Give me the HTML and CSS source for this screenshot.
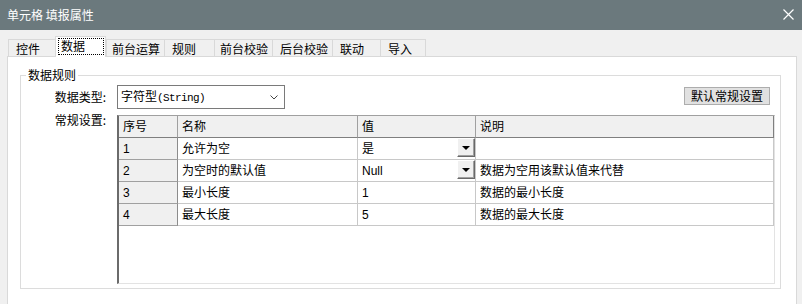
FILE: index.html
```html
<!DOCTYPE html>
<html lang="zh-CN">
<head>
    <meta charset="UTF-8">
    <title>单元格 填报属性</title>
    <link rel="stylesheet" href="styles.css">
</head>
<body>
    <div class="titlebar">
        <span class="title">单元格 填报属性</span>
        <svg class="close" width="11" height="11" viewBox="0 0 11 11">
            <path d="M0.5 0.5 L10.5 10.5 M10.5 0.5 L0.5 10.5" stroke="#fff" stroke-width="1.2" fill="none"/>
        </svg>
    </div>

    <div class="tabs">
        <div class="tab">控件</div>
        <div class="tab active"><span class="focus">数据</span></div>
        <div class="tab long">前台运算</div>
        <div class="tab">规则</div>
        <div class="tab long">前台校验</div>
        <div class="tab">后台校验</div>
        <div class="tab">联动</div>
        <div class="tab last">导入</div>
    </div>

    <div class="panel">
        <fieldset class="group">
            <legend>数据规则</legend>

            <div class="row">
                <label class="lbl">数据类型:</label>
                <div class="combo">
                    <span>字符型<span class="mono">(String)</span></span>
                    <svg width="8" height="5" viewBox="0 0 8 5">
                        <path d="M0.5 0.5 L4 4 L7.5 0.5" stroke="#444" stroke-width="1" fill="none"/>
                    </svg>
                </div>
                <button class="btn">默认常规设置</button>
            </div>

            <div class="row grid-row">
                <label class="lbl top">常规设置:</label>
                <div class="grid">
                    <div class="grid-line head">
                        <div class="cell">序号</div>
                        <div class="cell">名称</div>
                        <div class="cell">值</div>
                        <div class="cell">说明</div>
                    </div>
                    <div class="grid-line">
                        <div class="cell num">1</div>
                        <div class="cell">允许为空</div>
                        <div class="cell drop">
                            <span>是</span>
                            <span class="drop-btn"></span>
                        </div>
                        <div class="cell"></div>
                    </div>
                    <div class="grid-line">
                        <div class="cell num">2</div>
                        <div class="cell">为空时的默认值</div>
                        <div class="cell drop">
                            <span>Null</span>
                            <span class="drop-btn"></span>
                        </div>
                        <div class="cell">数据为空用该默认值来代替</div>
                    </div>
                    <div class="grid-line">
                        <div class="cell num">3</div>
                        <div class="cell">最小长度</div>
                        <div class="cell">1</div>
                        <div class="cell">数据的最小长度</div>
                    </div>
                    <div class="grid-line">
                        <div class="cell num">4</div>
                        <div class="cell">最大长度</div>
                        <div class="cell">5</div>
                        <div class="cell">数据的最大长度</div>
                    </div>
                </div>
            </div>
        </fieldset>
    </div>
</body>
</html>
```

FILE: styles.css
```css
* {
    box-sizing: border-box;
}
body {
    margin: 0;
    width: 802px;
    height: 304px;
    overflow: hidden;
    background-color: #f0f0f0;
    font-family: "Liberation Sans", "Noto Sans CJK SC", sans-serif;
    font-size: 12px;
    line-height: 14px;
    color: #000;
}

/* window title */
.titlebar {
    height: 30px;
    background-color: #6b797d;
    display: flex;
    align-items: center;
    padding: 0 7px;
    color: #fff;
}
.title {
    flex: 1;
    font-family: "Noto Sans CJK SC", sans-serif;
}
.close {
    margin-right: 1px;
    margin-top: -1px;
}

/* tab strip */
.tabs {
    display: flex;
    align-items: flex-end;
    height: 27px;
    padding-left: 8px;
}
.tab {
    height: 17px;
    margin-bottom: 1px;
    padding: 1px 0 0 7px;
    border-top: 1px solid #d9d9d9;
    border-left: 1px solid #d9d9d9;
    background-color: #f0f0f0;
    font-family: "Noto Sans CJK SC", sans-serif;
    line-height: 15px;
}
.tab.long {
    padding-left: 5px;
}
.tab.last {
    border-right: 1px solid #d9d9d9;
}
.tab:nth-child(1) { width: 47px; }
.tab:nth-child(2) { width: 51px; }
.tab:nth-child(3) { width: 58px; }
.tab:nth-child(4) { width: 50px; }
.tab:nth-child(5) { width: 58px; }
.tab:nth-child(6) { width: 60px; }
.tab:nth-child(7) { width: 48px; }
.tab:nth-child(8) { width: 46px; }
.tab.active {
    position: relative;
    z-index: 1;
    height: 21px;
    margin-bottom: 0;
    padding: 1px 0 0 2px;
    border-right: 1px solid #d9d9d9;
    background-color: #fff;
}
.focus {
    display: inline-block;
    width: 46px;
    height: 17px;
    padding-left: 2px;
    border: 1px dotted #000;
    line-height: 14px;
}

/* white page under the tabs */
.panel {
    width: 790px;
    height: 260px;
    margin: -1px 0 0 7px;
    padding: 11px 15px 0 12px;
    background-color: #fff;
    border: 1px solid #d9d9d9;
    font-family: "Noto Sans CJK SC", sans-serif;
}
.group {
    margin: 0;
    padding: 0 0 4px 0;
    min-width: 0;
    border: 1px solid #dcdcdc;
}
.group legend {
    margin-left: 5px;
    padding: 0 2px;
    line-height: 14px;
}
.row {
    display: flex;
    align-items: center;
    margin-top: 3px;
}
.grid-row {
    align-items: flex-start;
    margin-top: 6px;
}
.lbl {
    width: 96px;
    padding-right: 11px;
    text-align: right;
}
.lbl.top {
    margin-top: -2px;
}
.combo {
    width: 168px;
    height: 24px;
    display: flex;
    align-items: center;
    justify-content: space-between;
    padding: 0 6px 0 3px;
    border: 1px solid #7a7a7a;
    background-color: #fff;
}
.mono {
    font-family: "Liberation Mono", monospace;
    font-size: 11px;
    letter-spacing: -0.6px;
}
.btn {
    margin: 2px 10px 0 auto;
    align-self: flex-start;
    height: 18px;
    padding: 0 6px;
    border: 1px solid #adadad;
    background-color: #e1e1e1;
    font-family: "Noto Sans CJK SC", sans-serif;
    font-size: 12px;
    line-height: 14px;
    color: #000;
}

/* data grid */
.grid {
    width: 658px;
    height: 169px;
    margin-right: 5px;
    border-top: 1px solid #a0a0a0;
    border-left: 2px solid #6b6b6b;
    border-right: 1px solid #e3e3e3;
    border-bottom: 1px solid #e3e3e3;
    background-color: #fff;
    font-family: "Liberation Sans", "Noto Sans CJK SC", sans-serif;
}
.grid-line {
    display: grid;
    grid-template-columns: 59px 180px 118px 298px;
    height: 22px;
}
.cell {
    padding: 4px 0 0 4px;
    line-height: 14px;
    border-right: 1px solid #c8c8c8;
    border-bottom: 1px solid #c8c8c8;
    white-space: nowrap;
    overflow: hidden;
}
.head .cell {
    background-color: #f0f0f0;
    border-right-color: #a0a0a0;
    border-bottom-color: #7f7f7f;
}
.head .cell:last-child {
    border-right-color: #7f7f7f;
}
.cell.num {
    background-color: #f0f0f0;
    border-right-color: #8c8c8c;
    border-bottom-color: #a0a0a0;
}
.cell.drop {
    display: flex;
    justify-content: space-between;
    align-items: flex-start;
    padding-top: 0;
}
.cell.drop span:first-child {
    padding-top: 4px;
}
.drop-btn {
    width: 18px;
    height: 19px;
    display: flex;
    align-items: center;
    justify-content: center;
    background-color: #f0f0f0;
    border-top: 1px solid #fff;
    border-left: 1px solid #fff;
    border-right: 1px solid #696969;
    border-bottom: 1px solid #696969;
    box-shadow: inset -1px -1px 0 #a0a0a0;
}
.drop-btn::after {
    content: "";
    border-left: 4px solid transparent;
    border-right: 4px solid transparent;
    border-top: 4px solid #000;
    margin-top: 1px;
}
```
